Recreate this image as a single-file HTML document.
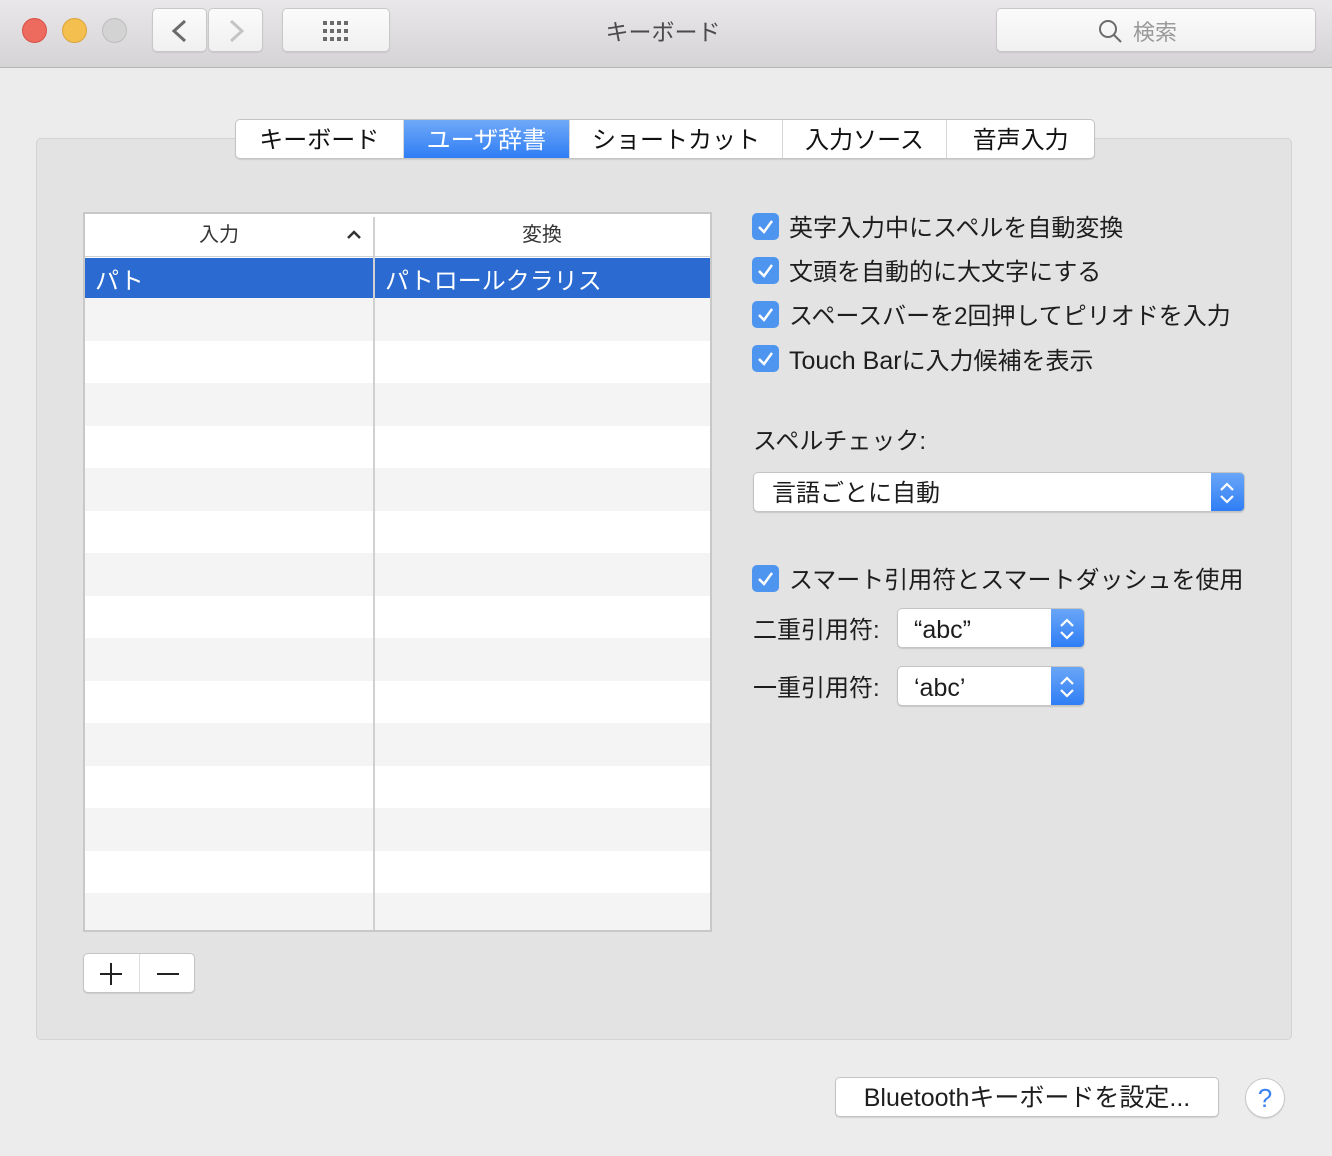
<!DOCTYPE html>
<html><head><meta charset="utf-8"><style>
*{margin:0;padding:0;box-sizing:border-box}
body{width:1332px;height:1156px;background:#ececec;font-family:"Liberation Sans","Noto Sans CJK JP",sans-serif;position:relative;overflow:hidden;color:#1d1d1d;line-height:1}
.a{position:absolute}
.tb{left:0;top:0;width:1332px;height:68px;background:linear-gradient(#e9e7e9,#d5d3d5);border-bottom:1px solid #b5b5b5}
.dot{width:25px;height:25px;border-radius:50%;top:18px}
.btn{background:linear-gradient(#fbfbfb,#f0f0f0);border:1px solid #c8c8c8;border-radius:5px;box-shadow:0 1px 1px rgba(0,0,0,.08)}
.panel{left:36px;top:138px;width:1256px;height:902px;background:#e3e3e3;border:1px solid #d3d3d3;border-radius:5px}
.tabs{left:235px;top:119px;width:860px;height:40px;background:#fff;border:1px solid #c4c4c4;border-radius:5px;box-shadow:0 1px 1px rgba(0,0,0,.1);display:flex;overflow:hidden;font-size:24px}
.tabs div{display:flex;align-items:center;justify-content:center;border-right:1px solid #d6d6d6;color:#111;padding-top:4px}
.tabs .on{background:linear-gradient(#6fa8f7,#2f7ef6);color:#fff}
.cb{width:27px;height:27px;border-radius:5px;background:#4e95f0;left:752px}
.cb svg{position:absolute;left:5px;top:5px}
.lbl{font-size:24px;left:789px;white-space:nowrap}
.lt{font-size:25px}
.pop{background:#fff;border:1px solid #c4c4c4;border-radius:5px;box-shadow:0 1px 1px rgba(0,0,0,.12);font-size:24px;overflow:hidden}
.pop .st{position:absolute;right:0;top:0;bottom:0;width:33px;background:linear-gradient(#6aa6f7,#2f7ef6)}
</style></head><body>
<div class="a tb"></div>
<div class="a dot" style="left:22px;background:#ed6a5e;border:1px solid #d65246"></div>
<div class="a dot" style="left:62px;background:#f5bf4f;border:1px solid #d9a33a"></div>
<div class="a dot" style="left:102px;background:#d3d3d3;border:1px solid #bdbdbd"></div>
<div class="a btn" style="left:152px;top:8px;width:55px;height:44px"><svg width="55" height="44"><path d="M32 12 L21 22 L32 32" fill="none" stroke="#6b6b6b" stroke-width="3"/></svg></div>
<div class="a btn" style="left:208px;top:8px;width:55px;height:44px"><svg width="55" height="44"><path d="M22 12 L33 22 L22 32" fill="none" stroke="#c4c4c4" stroke-width="3"/></svg></div>
<div class="a btn" style="left:282px;top:8px;width:108px;height:44px"><svg width="108" height="44"><g fill="#6b6b6b"><rect x="40" y="12" width="4" height="4"/><rect x="47" y="12" width="4" height="4"/><rect x="54" y="12" width="4" height="4"/><rect x="61" y="12" width="4" height="4"/><rect x="40" y="20" width="4" height="4"/><rect x="47" y="20" width="4" height="4"/><rect x="54" y="20" width="4" height="4"/><rect x="61" y="20" width="4" height="4"/><rect x="40" y="28" width="4" height="4"/><rect x="47" y="28" width="4" height="4"/><rect x="54" y="28" width="4" height="4"/><rect x="61" y="28" width="4" height="4"/></g></svg></div>
<div class="a" style="left:0;width:1326px;top:21px;text-align:center;font-size:23px;color:#4a4a4a">キーボード</div>
<div class="a btn" style="left:996px;top:8px;width:320px;height:44px"><svg class="a" style="left:100px;top:9px" width="28" height="28"><circle cx="11" cy="11" r="8" fill="none" stroke="#6b6b6b" stroke-width="2"/><path d="M17 17 L24 24" stroke="#6b6b6b" stroke-width="2"/></svg><span class="a" style="left:136px;top:13px;font-size:22px;color:#9a9a9a">検索</span></div>

<div class="a panel"></div>
<div class="a tabs"><div style="width:168px">キーボード</div><div class="on" style="width:167px">ユーザ辞書</div><div style="width:213px">ショートカット</div><div style="width:165px">入力ソース</div><div style="width:147px;border:none">音声入力</div></div>

<div class="a" style="left:83px;top:212px;width:629px;height:720px;border:2px solid #c8c8c8;background:repeating-linear-gradient(#f4f4f4 0 43px,#fff 43px 85px);background-position:0 84px;background-color:#fff"></div>
<div class="a" style="left:85px;top:214px;width:625px;height:43px;background:#fff;border-bottom:1px solid #d0d0d0"></div>
<div class="a" style="left:85px;top:225px;width:268px;text-align:center;font-size:20px;color:#333">入力</div>
<svg class="a" style="left:346px;top:228px" width="16" height="12"><path d="M2 10 L8 4 L14 10" fill="none" stroke="#333" stroke-width="2.5"/></svg>
<div class="a" style="left:374px;top:225px;width:336px;text-align:center;font-size:20px;color:#333">変換</div>
<div class="a" style="left:85px;top:258px;width:625px;height:40px;background:#2b6bd1"></div>
<div class="a" style="left:373px;top:217px;width:2px;height:713px;background:#d0d0d0"></div>
<div class="a" style="left:95px;top:270px;font-size:24px;color:#fff">パト</div>
<div class="a" style="left:385px;top:270px;font-size:24px;color:#fff">パトロールクラリス</div>
<div class="a" style="left:83px;top:953px;width:112px;height:40px;background:#fff;border:1px solid #c4c4c4;border-radius:5px;box-shadow:0 1px 1px rgba(0,0,0,.1)"><div class="a" style="left:55px;top:0;width:1px;height:38px;background:#ddd"></div><svg class="a" style="left:14px;top:7px" width="26" height="26"><path d="M13 2V24M2 13H24" stroke="#222" stroke-width="2"/></svg><svg class="a" style="left:71px;top:7px" width="26" height="26"><path d="M2 13H24" stroke="#222" stroke-width="2"/></svg></div>

<div class="a cb" style="top:213px"><svg width="17" height="17"><path d="M2 9 L7 14 L15 3" fill="none" stroke="#fff" stroke-width="2.5"/></svg></div>
<div class="a lbl" style="top:217px">英字入力中にスペルを自動変換</div>
<div class="a cb" style="top:257px"><svg width="17" height="17"><path d="M2 9 L7 14 L15 3" fill="none" stroke="#fff" stroke-width="2.5"/></svg></div>
<div class="a lbl" style="top:261px">文頭を自動的に大文字にする</div>
<div class="a cb" style="top:301px"><svg width="17" height="17"><path d="M2 9 L7 14 L15 3" fill="none" stroke="#fff" stroke-width="2.5"/></svg></div>
<div class="a lbl" style="top:305px">スペースバーを2回押してピリオドを入力</div>
<div class="a cb" style="top:345px"><svg width="17" height="17"><path d="M2 9 L7 14 L15 3" fill="none" stroke="#fff" stroke-width="2.5"/></svg></div>
<div class="a lbl" style="top:349px"><span class="lt">Touch Bar</span>に入力候補を表示</div>
<div class="a lbl" style="left:753px;top:430px">スペルチェック:</div>
<div class="a pop" style="left:753px;top:472px;width:492px;height:40px"><span class="a" style="left:18px;top:9px">言語ごとに自動</span><div class="st"><svg width="33" height="40"><path d="M10 17 L16 11 L22 17M10 23 L16 29 L22 23" fill="none" stroke="#fff" stroke-width="2.2"/></svg></div></div>
<div class="a cb" style="top:565px"><svg width="17" height="17"><path d="M2 9 L7 14 L15 3" fill="none" stroke="#fff" stroke-width="2.5"/></svg></div>
<div class="a lbl" style="top:569px">スマート引用符とスマートダッシュを使用</div>
<div class="a lbl" style="left:753px;top:619px">二重引用符:</div>
<div class="a pop" style="left:897px;top:608px;width:188px;height:40px"><span class="a lt" style="left:16px;top:9px">“abc”</span><div class="st"><svg width="33" height="40"><path d="M10 17 L16 11 L22 17M10 23 L16 29 L22 23" fill="none" stroke="#fff" stroke-width="2.2"/></svg></div></div>
<div class="a lbl" style="left:753px;top:677px">一重引用符:</div>
<div class="a pop" style="left:897px;top:666px;width:188px;height:40px"><span class="a lt" style="left:16px;top:9px">‘abc’</span><div class="st"><svg width="33" height="40"><path d="M10 17 L16 11 L22 17M10 23 L16 29 L22 23" fill="none" stroke="#fff" stroke-width="2.2"/></svg></div></div>

<div class="a pop" style="left:835px;top:1077px;width:384px;height:40px;display:flex;align-items:center;justify-content:center;font-size:25px;padding-top:2px">Bluetoothキーボードを設定...</div>
<div class="a" style="left:1245px;top:1078px;width:40px;height:40px;border-radius:50%;background:#fff;border:1px solid #c8c8c8;box-shadow:0 1px 1px rgba(0,0,0,.1);display:flex;align-items:center;justify-content:center;font-size:26px;color:#3b82f0">?</div>
</body></html>
